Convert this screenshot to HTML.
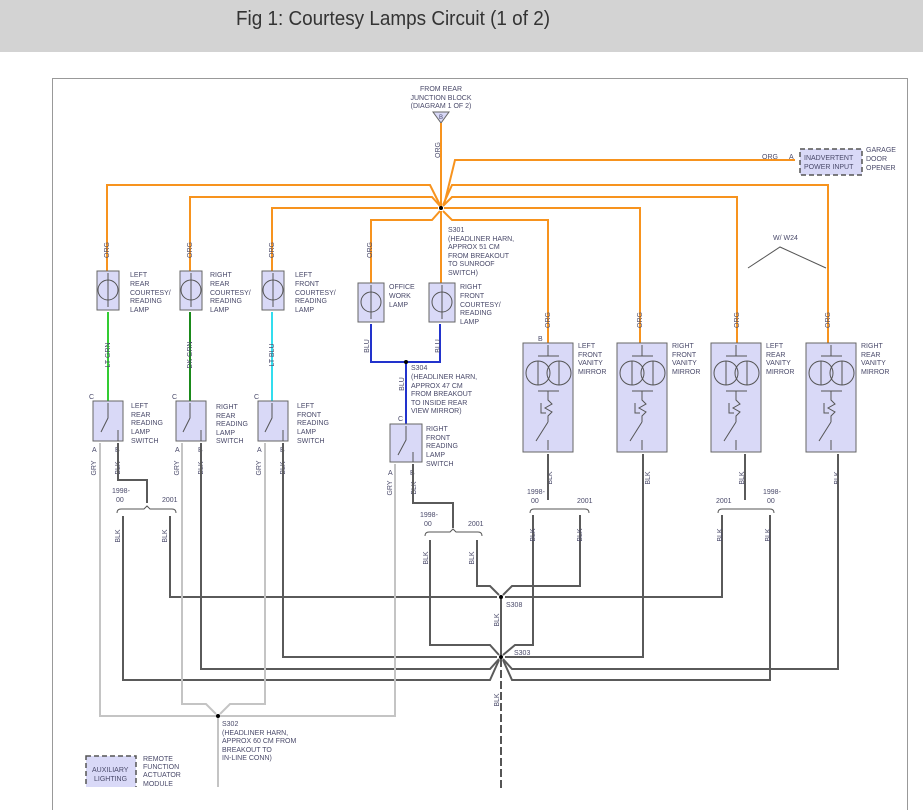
<!DOCTYPE html>
<html><head><meta charset="utf-8"><style>
html,body{margin:0;padding:0;background:#fff;width:923px;height:810px;overflow:hidden}
svg{display:block}
text{font-family:"Liberation Sans",sans-serif;font-size:7px;fill:#4a4a6a}
.t{font-size:20px;fill:#333}
.o{fill:none;stroke:#f7931e;stroke-width:2}
.k{fill:none;stroke:#5a5a5a;stroke-width:2}
.g{fill:none;stroke:#c4c4c4;stroke-width:2}
.bx{fill:#d9d9f7;stroke:#666;stroke-width:1}
.ln{fill:none;stroke:#555;stroke-width:1}
</style></head><body>
<svg width="923" height="810" viewBox="0 0 923 810">
<rect x="0" y="0" width="923" height="52" fill="#d3d3d3"/>
<text class="t" x="236" y="25" textLength="314" lengthAdjust="spacingAndGlyphs">Fig 1: Courtesy Lamps Circuit (1 of 2)</text>
<path d="M52.5 810V78.5H907.5V810" fill="none" stroke="#999" stroke-width="1"/>

<text x="441" y="91" text-anchor="middle">FROM REAR</text>
<text x="441" y="100" text-anchor="middle">JUNCTION BLOCK</text>
<text x="441" y="108" text-anchor="middle">(DIAGRAM 1 OF 2)</text>
<path d="M433 112H449L441 123Z" class="bx"/>
<text x="441" y="119" text-anchor="middle" style="font-size:6px">B</text>
<text x="440" y="150" transform="rotate(-90 440 150)" text-anchor="middle">ORG</text>

<path class="o" d="M441 123V208"/>
<path class="o" d="M107 271V185H430L440 205"/>
<path class="o" d="M190 271V197H432L440 206"/>
<path class="o" d="M272 271V208H438"/>
<path class="o" d="M371 283V220H432L440 211"/>
<path class="o" d="M441 211V283"/>
<path class="o" d="M444 205L455 160H795"/>
<path class="o" d="M443 205L452 185H828V343"/>
<path class="o" d="M443 206L452 197H737V343"/>
<path class="o" d="M444 208H640V343"/>
<path class="o" d="M443 211L452 220H548V343"/>
<circle cx="441" cy="208" r="2" fill="#000"/>
<text x="762" y="159">ORG</text><text x="789" y="159">A</text>
<rect x="800" y="149" width="62" height="26" fill="#d9d9f7" stroke="#555" stroke-dasharray="5 3" stroke-width="1.5"/>
<text x="804" y="160">INADVERTENT</text><text x="804" y="169">POWER INPUT</text>
<text x="866" y="152">GARAGE</text><text x="866" y="161">DOOR</text><text x="866" y="170">OPENER</text>
<text x="773" y="240">W/ W24</text>
<path class="ln" d="M748 268L780 247L826 268"/>
<text x="448" y="232">S301</text>
<text x="448" y="241">(HEADLINER HARN,</text><text x="448" y="249">APPROX 51 CM</text><text x="448" y="258">FROM BREAKOUT</text><text x="448" y="266">TO SUNROOF</text><text x="448" y="275">SWITCH)</text>

<text x="109" y="250" transform="rotate(-90 109 250)" text-anchor="middle">ORG</text>
<text x="192" y="250" transform="rotate(-90 192 250)" text-anchor="middle">ORG</text>
<text x="274" y="250" transform="rotate(-90 274 250)" text-anchor="middle">ORG</text>
<text x="372" y="250" transform="rotate(-90 372 250)" text-anchor="middle">ORG</text>
<text x="550" y="320" transform="rotate(-90 550 320)" text-anchor="middle">ORG</text>
<text x="642" y="320" transform="rotate(-90 642 320)" text-anchor="middle">ORG</text>
<text x="739" y="320" transform="rotate(-90 739 320)" text-anchor="middle">ORG</text>
<text x="830" y="320" transform="rotate(-90 830 320)" text-anchor="middle">ORG</text>

<g>
<rect class="bx" x="97" y="271" width="22" height="39"/><circle class="ln" cx="108" cy="290" r="10"/><path class="ln" d="M108 273V307"/>
<rect class="bx" x="180" y="271" width="22" height="39"/><circle class="ln" cx="191" cy="290" r="10"/><path class="ln" d="M191 273V307"/>
<rect class="bx" x="262" y="271" width="22" height="39"/><circle class="ln" cx="273" cy="290" r="10"/><path class="ln" d="M273 273V307"/>
<rect class="bx" x="358" y="283" width="26" height="39"/><circle class="ln" cx="371" cy="302" r="10"/><path class="ln" d="M371 285V319"/>
<rect class="bx" x="429" y="283" width="26" height="39"/><circle class="ln" cx="442" cy="302" r="10"/><path class="ln" d="M442 285V319"/>
</g>
<text x="130" y="277">LEFT</text><text x="130" y="286">REAR</text><text x="130" y="295">COURTESY/</text><text x="130" y="303">READING</text><text x="130" y="312">LAMP</text>
<text x="210" y="277">RIGHT</text><text x="210" y="286">REAR</text><text x="210" y="295">COURTESY/</text><text x="210" y="303">READING</text><text x="210" y="312">LAMP</text>
<text x="295" y="277">LEFT</text><text x="295" y="286">FRONT</text><text x="295" y="295">COURTESY/</text><text x="295" y="303">READING</text><text x="295" y="312">LAMP</text>
<text x="389" y="289">OFFICE</text><text x="389" y="298">WORK</text><text x="389" y="307">LAMP</text>
<text x="460" y="289">RIGHT</text><text x="460" y="298">FRONT</text><text x="460" y="307">COURTESY/</text><text x="460" y="315">READING</text><text x="460" y="324">LAMP</text>

<path d="M108 312V401" stroke="#33cc33" stroke-width="2"/>
<path d="M190 312V401" stroke="#1a8a1a" stroke-width="2"/>
<path d="M272 312V401" stroke="#33ddee" stroke-width="2"/>
<text x="110" y="355" transform="rotate(-90 110 355)" text-anchor="middle">LT GRN</text>
<text x="192" y="355" transform="rotate(-90 192 355)" text-anchor="middle">DK GRN</text>
<text x="274" y="355" transform="rotate(-90 274 355)" text-anchor="middle">LT BLU</text>
<path d="M371 324V362H440V324M406 362V424" stroke="#2233cc" stroke-width="2" fill="none"/>
<circle cx="406" cy="362" r="2" fill="#000"/>
<text x="369" y="346" transform="rotate(-90 369 346)" text-anchor="middle">BLU</text>
<text x="440" y="346" transform="rotate(-90 440 346)" text-anchor="middle">BLU</text>
<text x="404" y="384" transform="rotate(-90 404 384)" text-anchor="middle">BLU</text>
<text x="411" y="370">S304</text><text x="411" y="379">(HEADLINER HARN,</text><text x="411" y="388">APPROX 47 CM</text><text x="411" y="396">FROM BREAKOUT</text><text x="411" y="405">TO INSIDE REAR</text><text x="411" y="413">VIEW MIRROR)</text>

<rect class="bx" x="93" y="401" width="30" height="40"/><path class="ln" d="M108 403V418L101 432M118 441V430"/>
<rect class="bx" x="176" y="401" width="30" height="40"/><path class="ln" d="M190 403V418L183 432M201 441V430"/>
<rect class="bx" x="258" y="401" width="30" height="40"/><path class="ln" d="M272 403V418L265 432M283 441V430"/>
<rect class="bx" x="390" y="424" width="32" height="38"/><path class="ln" d="M406 426V440L398 455M413 462V452"/>
<text x="89" y="399">C</text><text x="172" y="399">C</text><text x="254" y="399">C</text><text x="398" y="421">C</text>
<text x="131" y="408">LEFT</text><text x="131" y="417">REAR</text><text x="131" y="425">READING</text><text x="131" y="434">LAMP</text><text x="131" y="443">SWITCH</text>
<text x="216" y="409">RIGHT</text><text x="216" y="418">REAR</text><text x="216" y="426">READING</text><text x="216" y="435">LAMP</text><text x="216" y="443">SWITCH</text>
<text x="297" y="408">LEFT</text><text x="297" y="417">FRONT</text><text x="297" y="425">READING</text><text x="297" y="434">LAMP</text><text x="297" y="443">SWITCH</text>
<text x="426" y="431">RIGHT</text><text x="426" y="440">FRONT</text><text x="426" y="448">READING</text><text x="426" y="457">LAMP</text><text x="426" y="466">SWITCH</text>
<text x="92" y="452">A</text><text x="115" y="452">B</text><text x="175" y="452">A</text><text x="198" y="452">B</text><text x="257" y="452">A</text><text x="280" y="452">B</text><text x="388" y="475">A</text><text x="410" y="475">B</text>
<text x="96" y="468" transform="rotate(-90 96 468)" text-anchor="middle">GRY</text>
<text x="120" y="468" transform="rotate(-90 120 468)" text-anchor="middle">BLK</text>
<text x="179" y="468" transform="rotate(-90 179 468)" text-anchor="middle">GRY</text>
<text x="203" y="468" transform="rotate(-90 203 468)" text-anchor="middle">BLK</text>
<text x="261" y="468" transform="rotate(-90 261 468)" text-anchor="middle">GRY</text>
<text x="285" y="468" transform="rotate(-90 285 468)" text-anchor="middle">BLK</text>
<text x="392" y="488" transform="rotate(-90 392 488)" text-anchor="middle">GRY</text>
<text x="416" y="488" transform="rotate(-90 416 488)" text-anchor="middle">BLK</text>

<g id="m">
<rect class="bx" x="523" y="343" width="50" height="109"/>
<circle class="ln" cx="538" cy="373" r="12"/><circle class="ln" cx="559" cy="373" r="12"/>
<path class="ln" d="M548 345V356M538 356H559M538 391H559M548 391V400L552 404L545 408L552 412L548 416V422M541 403V413H546M548 422L536 441M548 450V440M538 361V385M559 361V385"/>
</g>
<use href="#m" x="94"/><use href="#m" x="188"/><use href="#m" x="283"/>
<text x="538" y="341">B</text>
<text x="578" y="348">LEFT</text><text x="578" y="357">FRONT</text><text x="578" y="365">VANITY</text><text x="578" y="374">MIRROR</text>
<text x="672" y="348">RIGHT</text><text x="672" y="357">FRONT</text><text x="672" y="365">VANITY</text><text x="672" y="374">MIRROR</text>
<text x="766" y="348">LEFT</text><text x="766" y="357">REAR</text><text x="766" y="365">VANITY</text><text x="766" y="374">MIRROR</text>
<text x="861" y="348">RIGHT</text><text x="861" y="357">REAR</text><text x="861" y="365">VANITY</text><text x="861" y="374">MIRROR</text>
<text x="552" y="478" transform="rotate(-90 552 478)" text-anchor="middle">BLK</text>
<text x="650" y="478" transform="rotate(-90 650 478)" text-anchor="middle">BLK</text>
<text x="744" y="478" transform="rotate(-90 744 478)" text-anchor="middle">BLK</text>
<text x="839" y="478" transform="rotate(-90 839 478)" text-anchor="middle">BLK</text>

<path class="k" d="M118 443V480H147V503"/>
<path class="k" d="M123 516V680H490L499 660"/>
<path class="k" d="M170 516V597H497"/>
<path class="k" d="M201 443V669H490L499 659"/>
<path class="k" d="M283 443V657H497"/>
<path class="k" d="M413 464V503H453V528"/>
<path class="k" d="M430 540V645H490L499 655"/>
<path class="k" d="M477 540V586H490L499 595"/>
<path class="k" d="M548 454V500"/>
<path class="k" d="M533 515V645H515L503 655"/>
<path class="k" d="M580 515V586H512L503 595"/>
<path class="k" d="M643 454V657H505"/>
<path class="k" d="M745 454V500"/>
<path class="k" d="M722 515V597H505"/>
<path class="k" d="M770 515V680H512L503 660"/>
<path class="k" d="M838 454V669H512L503 659"/>
<path class="k" d="M501 599V655"/>
<path d="M501 659V790" stroke="#555" stroke-width="2" stroke-dasharray="8 3"/>
<circle cx="501" cy="597" r="2" fill="#000"/><circle cx="501" cy="657" r="2" fill="#000"/>
<text x="506" y="607">S308</text><text x="514" y="655">S303</text>
<text x="499" y="620" transform="rotate(-90 499 620)" text-anchor="middle">BLK</text>
<text x="499" y="700" transform="rotate(-90 499 700)" text-anchor="middle">BLK</text>
<path class="ln" d="M117 513Q117 509 121 509H144L147 506L150 509H172Q176 509 176 513"/>
<path class="ln" d="M425 536Q425 532 429 532H450L453 529L456 532H478Q482 532 482 536"/>
<path class="ln" d="M530 513Q530 509 534 509H585Q589 509 589 513"/>
<path class="ln" d="M718 513Q718 509 722 509H770Q774 509 774 513"/>
<text x="112" y="493">1998-</text><text x="116" y="502">00</text><text x="162" y="502">2001</text>
<text x="420" y="517">1998-</text><text x="424" y="526">00</text><text x="468" y="526">2001</text>
<text x="527" y="494">1998-</text><text x="531" y="503">00</text><text x="577" y="503">2001</text>
<text x="716" y="503">2001</text><text x="763" y="494">1998-</text><text x="767" y="503">00</text>
<text x="120" y="536" transform="rotate(-90 120 536)" text-anchor="middle">BLK</text>
<text x="167" y="536" transform="rotate(-90 167 536)" text-anchor="middle">BLK</text>
<text x="428" y="558" transform="rotate(-90 428 558)" text-anchor="middle">BLK</text>
<text x="474" y="558" transform="rotate(-90 474 558)" text-anchor="middle">BLK</text>
<text x="535" y="535" transform="rotate(-90 535 535)" text-anchor="middle">BLK</text>
<text x="582" y="535" transform="rotate(-90 582 535)" text-anchor="middle">BLK</text>
<text x="722" y="535" transform="rotate(-90 722 535)" text-anchor="middle">BLK</text>
<text x="770" y="535" transform="rotate(-90 770 535)" text-anchor="middle">BLK</text>

<path class="g" d="M100 443V716H395V464"/>
<path class="g" d="M182 443V704H206L216 714M265 443V704H230L220 714"/>
<path d="M218 716V787" stroke="#888" stroke-width="1"/>
<circle cx="218" cy="716" r="2" fill="#000"/>
<text x="222" y="726">S302</text><text x="222" y="735">(HEADLINER HARN,</text><text x="222" y="743">APPROX 60 CM FROM</text><text x="222" y="752">BREAKOUT TO</text><text x="222" y="760">IN-LINE CONN)</text>
<rect x="86" y="756" width="50" height="40" fill="#d9d9f7" stroke="#555" stroke-dasharray="5 3" stroke-width="1.5"/>
<rect x="80" y="787" width="80" height="23" fill="#fff"/>
<text x="92" y="772">AUXILIARY</text><text x="94" y="781">LIGHTING</text>
<text x="143" y="761">REMOTE</text><text x="143" y="769">FUNCTION</text><text x="143" y="777">ACTUATOR</text><text x="143" y="786">MODULE</text>
</svg>
</body></html>
